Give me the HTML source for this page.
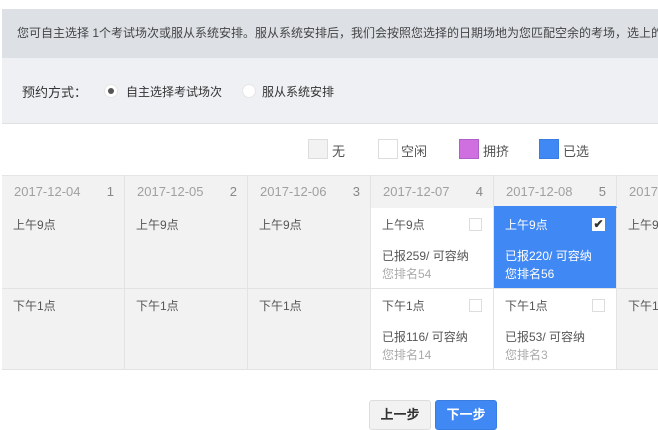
<!DOCTYPE html>
<html><head><meta charset="utf-8"><style>
*{margin:0;padding:0;box-sizing:border-box}
body{width:658px;height:430px;overflow:hidden;background:#fff;font-family:"Liberation Sans","Noto Sans CJK SC",sans-serif;font-size:12px;color:#333;position:relative}
.banner{position:absolute;left:2px;top:9px;width:656px;height:49px;background:#dde1e6;line-height:49px;padding-left:15px;white-space:nowrap;overflow:hidden;color:#444}
.mode{position:absolute;left:2px;top:58px;width:656px;height:66px;background:#eef0f3;border-bottom:1px solid #e0e0e0}
.mode span{position:absolute;top:24px;font-size:13px;white-space:nowrap}
.radio{position:absolute;top:26px;width:14px;height:14px;border-radius:50%;background:#fff;border:1px solid #e5e5e5}
.radio.on::after{content:"";position:absolute;left:3px;top:3px;width:6px;height:6px;border-radius:50%;background:#555}
.leg{position:absolute;top:139px;width:20px;height:20px;border:1px solid #ddd}
.lt{position:absolute;top:141px;font-size:13px;color:#555}
.hd{position:absolute;top:175px;height:33px;background:#f2f2f2;border-top:1px solid #e5e5e5;border-right:1px solid #e3e3e3;color:#a0a0a0;font-size:13px;line-height:32px;padding:0 10px 0 12px;white-space:nowrap;overflow:hidden}
.hd b{font-weight:normal;float:right;color:#888}
.c{position:absolute;height:81px;border-right:1px solid #e3e3e3;border-bottom:1px solid #e3e3e3;padding:8px 11px;font-size:12px;color:#555;white-space:nowrap;overflow:hidden}
.g{background:#f2f2f2}
.c .s{position:absolute;left:11px;top:39px}
.c .r{position:absolute;left:11px;top:57px;color:#aaa}
.cb{position:absolute;right:11px;top:10px;width:13px;height:13px;border:1px solid #ddd;background:#fff}
.sel{background:#4088f4;color:#fff}
.sel .r{color:#fff}
.btn{position:absolute;top:400px;height:30px;line-height:28px;text-align:center;font-size:13px;font-weight:bold;border-radius:3px}
</style></head><body>
<div class="banner">您可自主选择 1个考试场次或服从系统安排。服从系统安排后，我们会按照您选择的日期场地为您匹配空余的考场，选上的</div>
<div class="mode">
<span style="left:20px;color:#333">预约方式：</span>
<div class="radio on" style="left:102px"></div><span style="left:124px;font-size:12px;top:25px">自主选择考试场次</span>
<div class="radio" style="left:240px"></div><span style="left:260px;font-size:12px;top:25px">服从系统安排</span>
</div>
<div class="leg" style="left:308px;background:#f2f2f2"></div><div class="lt" style="left:332px">无</div>
<div class="leg" style="left:378px;background:#fff"></div><div class="lt" style="left:401px">空闲</div>
<div class="leg" style="left:459px;background:#d070e0;border-color:#b060c8"></div><div class="lt" style="left:483px">拥挤</div>
<div class="leg" style="left:539px;background:#4088f4;border-color:#3a7de0"></div><div class="lt" style="left:563px">已选</div>

<div class="hd" style="left:2px;width:123px">2017-12-04<b>1</b></div>
<div class="hd" style="left:125px;width:123px">2017-12-05<b>2</b></div>
<div class="hd" style="left:248px;width:123px">2017-12-06<b>3</b></div>
<div class="hd" style="left:371px;width:123px">2017-12-07<b>4</b></div>
<div class="hd" style="left:494px;width:123px;border-bottom:2px solid #4088f4">2017-12-08<b>5</b></div>
<div class="hd" style="left:617px;width:60px">2017-12-09</div>

<div class="c g" style="left:2px;top:208px;width:123px">上午9点</div>
<div class="c g" style="left:125px;top:208px;width:123px">上午9点</div>
<div class="c g" style="left:248px;top:208px;width:123px">上午9点</div>
<div class="c" style="left:371px;top:208px;width:123px">上午9点<div class="cb"></div><div class="s">已报259/ 可容纳</div><div class="r">您排名54</div></div>
<div class="c sel" style="left:494px;top:208px;width:123px">上午9点<div class="cb" style="border:none;background:#fff;color:#333;font-size:12px;line-height:13px;text-align:center;font-weight:bold">✔</div><div class="s">已报220/ 可容纳</div><div class="r">您排名56</div></div>
<div class="c g" style="left:617px;top:208px;width:60px">上午9点</div>

<div class="c g" style="left:2px;top:289px;width:123px">下午1点</div>
<div class="c g" style="left:125px;top:289px;width:123px">下午1点</div>
<div class="c g" style="left:248px;top:289px;width:123px">下午1点</div>
<div class="c" style="left:371px;top:289px;width:123px">下午1点<div class="cb"></div><div class="s">已报116/ 可容纳</div><div class="r">您排名14</div></div>
<div class="c" style="left:494px;top:289px;width:123px">下午1点<div class="cb"></div><div class="s">已报53/ 可容纳</div><div class="r">您排名3</div></div>
<div class="c g" style="left:617px;top:289px;width:60px">下午1点</div>

<div class="btn" style="left:369px;width:62px;background:#f2f2f2;border:1px solid #ddd;color:#333">上一步</div>
<div class="btn" style="left:435px;width:62px;background:#4088f4;color:#fff;border:1px solid #3a7de0">下一步</div>
</body></html>
